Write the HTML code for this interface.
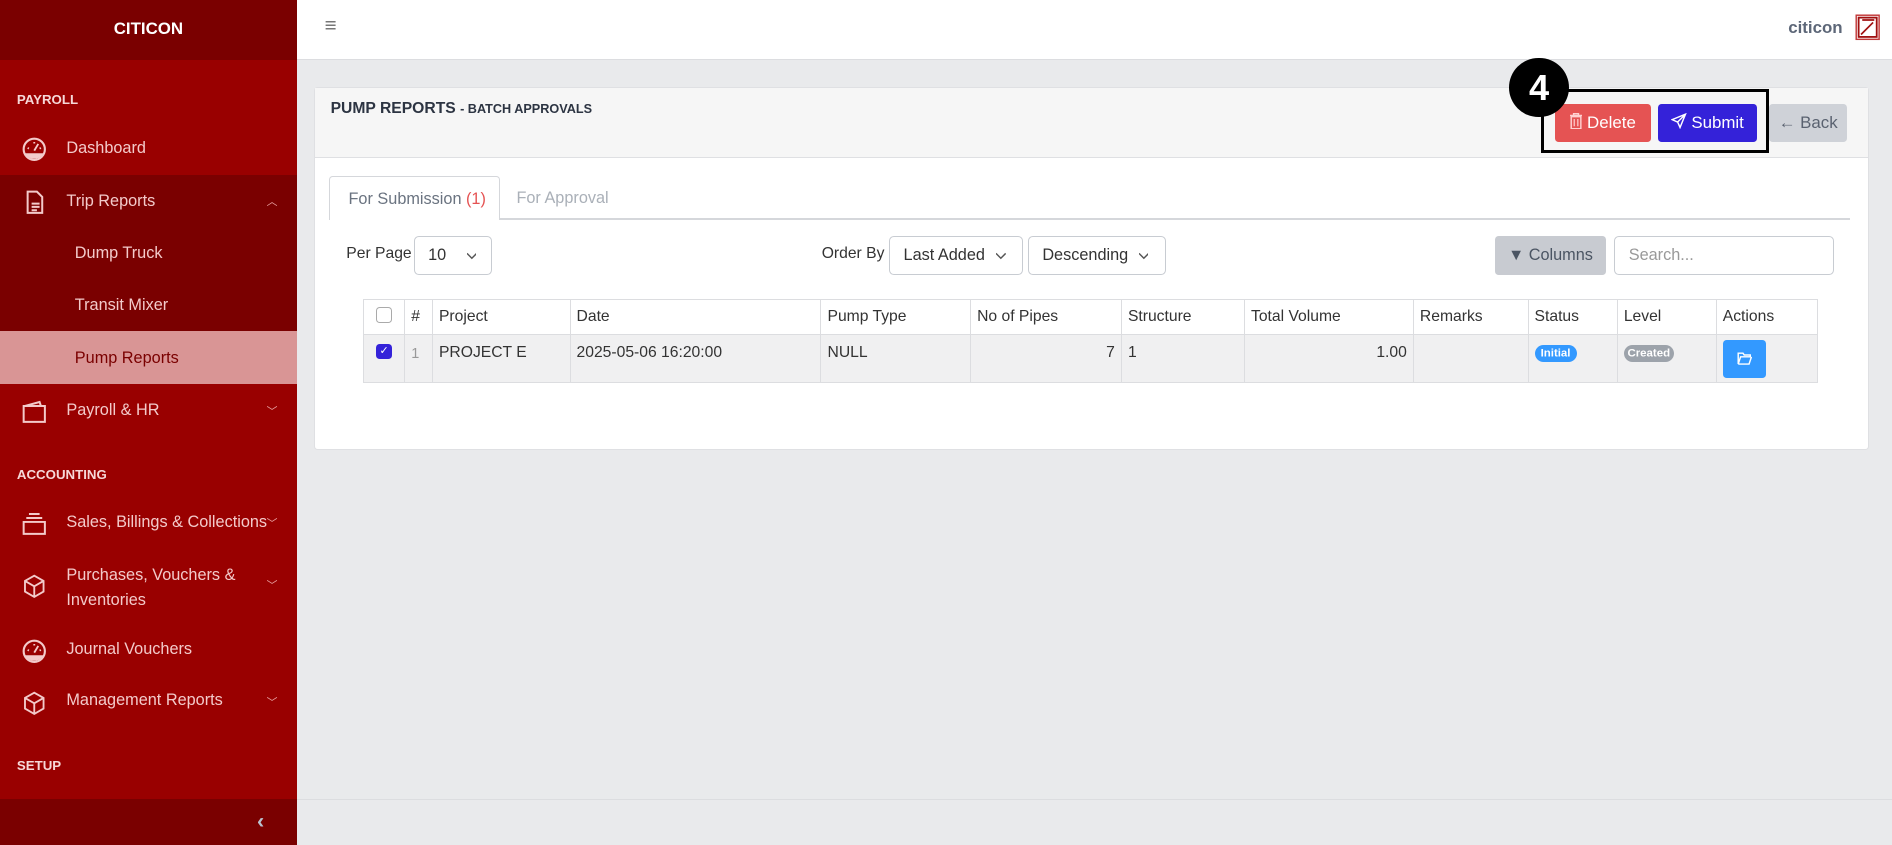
<!DOCTYPE html>
<html><head><meta charset="utf-8"><style>
*{box-sizing:border-box;margin:0;padding:0}
html,body{width:1892px;height:845px;overflow:hidden}
body{font-family:"Liberation Sans",sans-serif;background:#e9eaec;}
#w{zoom:1.20663;width:1568px;height:700.3px;position:relative;overflow:hidden;}
.a{position:absolute;white-space:nowrap}
#sb{position:absolute;left:0;top:0;width:246px;height:701px;background:#990000;color:#f3caca;font-size:13.5px}
.sec{font-size:11px;font-weight:bold;color:#f6d8d8;left:14px}
.it{left:55px}
.ic{left:17px;width:22px;height:22px}
.chev{left:221px;font-size:9px;color:#e8a0a0}
th,td{border:1px solid #dcdde0;font-size:13px;color:#333;text-align:left;padding:0 5px;font-weight:normal}
table{border-collapse:collapse;position:absolute;left:301px;top:248px;width:1206px;background:#fff}
.sel{position:absolute;border:1px solid #c8ccd2;border-radius:4px;background:#fff;font-size:13.5px;color:#333;height:32px;line-height:30px;padding-left:11px}
.dn{position:absolute;top:11px;width:8px;height:8px}
</style></head><body><div id="w">
<div id="sb">
 <div class="a" style="left:0;top:0;width:246px;height:50px;background:#7a0000"></div>
 <div class="a" style="left:0;top:16px;width:246px;text-align:center;color:#fff;font-weight:bold;font-size:14px">CITICON</div>
 <div class="a sec" style="top:76px">PAYROLL</div>
 <svg class="a ic" style="top:113px" viewBox="0 0 20 20"><circle cx="10" cy="10" r="8" fill="none" stroke="#f3caca" stroke-width="1.6"/><path d="M3 13h14a8 8 0 0 1-14 0z" fill="#f3caca"/><path d="M10 11l3-5M5 9l1 .5M15 9l-1 .5M10 4.5v1.2" stroke="#f3caca" stroke-width="1.4"/></svg>
 <div class="a it" style="top:115px">Dashboard</div>
 <div class="a" style="left:0;top:145px;width:246px;height:129px;background:#7a0000"></div>
 <svg class="a ic" style="top:157px" viewBox="0 0 20 20"><path d="M5 2h7l4 4v12H5z M8 11h6M8 13.5h6M8 16h4" fill="none" stroke="#f3caca" stroke-width="1.5"/></svg>
 <div class="a it" style="top:159px">Trip Reports</div>
 <div class="a chev" style="top:160px">︿</div>
 <div class="a" style="left:62px;top:202px">Dump Truck</div>
 <div class="a" style="left:62px;top:245px">Transit Mixer</div>
 <div class="a" style="left:0;top:274px;width:246px;height:44px;background:#d99595"></div>
 <div class="a" style="left:62px;top:289px;color:#7a0000">Pump Reports</div>
 <svg class="a ic" style="top:330px" viewBox="0 0 20 20"><path d="M2 6h16v12H2z M3 6l11-3 1 3" fill="none" stroke="#f3caca" stroke-width="1.5"/></svg>
 <div class="a it" style="top:332px">Payroll &amp; HR</div>
 <div class="a chev" style="top:334px">﹀</div>
 <div class="a sec" style="top:387px">ACCOUNTING</div>
 <svg class="a ic" style="top:423px" viewBox="0 0 20 20"><path d="M2 9h16v9H2z M4 6h12 M6 3h8" fill="none" stroke="#f3caca" stroke-width="1.5"/></svg>
 <div class="a it" style="top:425px">Sales, Billings &amp; Collections</div>
 <div class="a chev" style="top:427px">﹀</div>
 <svg class="a ic" style="top:475px" viewBox="0 0 20 20"><path d="M10 2l7 4v8l-7 4-7-4V6z M3 6l7 4 7-4 M10 10v8" fill="none" stroke="#f3caca" stroke-width="1.4"/></svg>
 <div class="a it" style="top:467px;line-height:20px;white-space:normal;width:150px">Purchases, Vouchers &amp; Inventories</div>
 <div class="a chev" style="top:478px">﹀</div>
 <svg class="a ic" style="top:529px" viewBox="0 0 20 20"><circle cx="10" cy="10" r="8" fill="none" stroke="#f3caca" stroke-width="1.6"/><path d="M3 13h14a8 8 0 0 1-14 0z" fill="#f3caca"/><path d="M10 11l3-5M5 9l1 .5M15 9l-1 .5M10 4.5v1.2" stroke="#f3caca" stroke-width="1.4"/></svg>
 <div class="a it" style="top:530px">Journal Vouchers</div>
 <svg class="a ic" style="top:572px" viewBox="0 0 20 20"><path d="M10 2l7 4v8l-7 4-7-4V6z M3 6l7 4 7-4 M10 10v8" fill="none" stroke="#f3caca" stroke-width="1.4"/></svg>
 <div class="a it" style="top:573px">Management Reports</div>
 <div class="a chev" style="top:575px">﹀</div>
 <div class="a sec" style="top:628px">SETUP</div>
 <div class="a" style="left:0;top:662px;width:246px;height:40px;background:#7a0000"></div>
 <div class="a" style="left:213px;top:670px;color:#b9c3d0;font-size:18px;font-weight:bold">‹</div>
</div>
<div class="a" style="left:246px;top:0;width:1322px;height:50px;background:#fff;border-bottom:1px solid #dcdde0"></div>
<div class="a" style="left:269px;top:12px;font-size:17px;color:#777">≡</div>
<div class="a" style="left:1482px;top:15px;font-size:14px;font-weight:bold;color:#5d6778">citicon</div>
<svg class="a" style="left:1537px;top:12px" width="21" height="22" viewBox="0 0 21 22"><rect x="1" y="1" width="19" height="20" fill="none" stroke="#c23a3a" stroke-width="1.2"/><rect x="3" y="3" width="15" height="16" fill="none" stroke="#a01010" stroke-width="1.5"/><path d="M5 17L15 7M6 5h10" stroke="#a01010" stroke-width="1.4"/></svg>
<div class="a" style="left:246px;top:662px;width:1322px;height:1px;background:#dcdde0"></div>
<div class="a" style="left:260px;top:72px;width:1289px;height:301px;background:#fff;border:1px solid #dfe0e3;border-radius:3px"></div>
<div class="a" style="left:261px;top:73px;width:1287px;height:58px;background:#f6f6f6;border-bottom:1px solid #dfe0e3"></div>
<div class="a" style="left:274px;top:83px;font-size:13px;font-weight:bold;color:#2c3442">PUMP REPORTS <span style="font-size:10.5px">- BATCH APPROVALS</span></div>
<div class="a" style="left:1289px;top:86px;width:79px;height:32px;background:#e55353;border-radius:3px;color:#fff;font-size:14px;line-height:32px;text-align:center"><svg width="10" height="13" viewBox="0 0 10 13" style="vertical-align:-1px;margin-right:4px"><path d="M0 2h10M3 2V0.5h4V2M1 3h8v10H1z" fill="none" stroke="#ffd0d0" stroke-width="1.2"/><path d="M3.5 5v6M6.5 5v6" stroke="#ffd0d0"/></svg>Delete</div>
<div class="a" style="left:1374px;top:86px;width:82px;height:32px;background:#3422d9;border-radius:3px;color:#fff;font-size:14px;line-height:32px;text-align:center"><svg width="13" height="13" viewBox="0 0 13 13" style="vertical-align:-1px;margin-right:4px"><path d="M12 1L1 5.5l4.5 2L7.5 12z M5.5 7.5L12 1" fill="none" stroke="#fff" stroke-width="1.2"/></svg>Submit</div>
<div class="a" style="left:1466px;top:86px;width:65px;height:32px;background:#cfd2d8;border-radius:3px;color:#5a6270;font-size:14px;line-height:32px;text-align:center">← Back</div>
<div class="a" style="left:1277px;top:74px;width:189px;height:53px;border:3px solid #000"></div>
<div class="a" style="left:1251px;top:48px;width:49px;height:49px;background:#000;border-radius:50%;color:#fff;font-size:30px;font-weight:bold;text-align:center;line-height:49px">4</div>
<div class="a" style="left:273px;top:181px;width:1260px;height:1px;background:#d5d7db"></div>
<div class="a" style="left:273px;top:146px;width:141px;height:36px;background:#fff;border:1px solid #d5d7db;border-bottom:none;border-radius:3px 3px 0 0;font-size:13.5px;color:#6a7380;padding:11px 0 0 15px">For Submission <span style="color:#e55353">(1)</span></div>
<div class="a" style="left:428px;top:157px;font-size:13.5px;color:#aab0b8">For Approval</div>
<div class="a" style="left:287px;top:203px;font-size:13px;color:#333">Per Page</div>
<div class="sel" style="left:343px;top:196px;width:65px">10 <svg class="dn" style="left:43px" viewBox="0 0 8 8"><path d="M0 2l4 4 4-4" fill="none" stroke="#555" stroke-width="1.2"/></svg></div>
<div class="a" style="left:681px;top:203px;font-size:13px;color:#333">Order By</div>
<div class="sel" style="left:737px;top:196px;width:111px">Last Added <svg class="dn" style="left:88px" viewBox="0 0 8 8"><path d="M0 2l4 4 4-4" fill="none" stroke="#555" stroke-width="1.2"/></svg></div>
<div class="sel" style="left:852px;top:196px;width:114px">Descending <svg class="dn" style="left:91px" viewBox="0 0 8 8"><path d="M0 2l4 4 4-4" fill="none" stroke="#555" stroke-width="1.2"/></svg></div>
<div class="a" style="left:1239px;top:196px;width:92px;height:32px;background:#c8cbd1;border-radius:3px;color:#4b5563;font-size:13.5px;line-height:32px;text-align:center">▼ Columns</div>
<div class="sel" style="left:1338px;top:196px;width:182px;color:#999">Search...</div>
<table>
<tr style="height:29px"><th style="width:34px"><span style="display:inline-block;width:13px;height:13px;border:1px solid #aaa;border-radius:3px;margin-left:5px"></span></th><th style="width:23px">#</th><th style="width:114px">Project</th><th style="width:208px">Date</th><th style="width:124px">Pump Type</th><th style="width:125px">No of Pipes</th><th style="width:102px">Structure</th><th style="width:140px">Total Volume</th><th style="width:95px">Remarks</th><th style="width:74px">Status</th><th style="width:82px">Level</th><th>Actions</th></tr>
<tr style="height:40px;background:#f0f0f1"><td style="vertical-align:top;padding-top:7px"><span style="display:inline-block;width:13px;height:13px;background:#3422d9;border-radius:3px;margin-left:5px;color:#fff;font-size:9px;text-align:center;line-height:13px;vertical-align:top">✓</span></td><td style="color:#999;font-size:12px;vertical-align:top;padding-top:9px">1</td><td style="vertical-align:top;padding-top:7px">PROJECT E</td><td style="vertical-align:top;padding-top:7px">2025-05-06 16:20:00</td><td style="vertical-align:top;padding-top:7px">NULL</td><td style="text-align:right;vertical-align:top;padding-top:7px">7</td><td style="vertical-align:top;padding-top:7px">1</td><td style="text-align:right;vertical-align:top;padding-top:7px">1.00</td><td></td><td style="vertical-align:top;padding-top:7px"><span style="background:#3399ff;color:#fff;font-size:9.5px;font-weight:bold;border-radius:9px;padding:2px 5px">Initial</span></td><td style="vertical-align:top;padding-top:7px"><span style="background:#9da3ab;color:#fff;font-size:9.5px;font-weight:bold;border-radius:9px;padding:2px 3px">Created</span></td><td><span style="display:inline-block;width:36px;height:32px;background:#3399ff;border-radius:3px;text-align:center;padding-top:10px"><svg width="13" height="11" viewBox="0 0 13 11"><path d="M1 1h4l1 1.5h5V4H3L1 10z M1 10h9l2-6" fill="none" stroke="#fff" stroke-width="1.2"/></svg></span></td></tr>
</table>
</div></body></html>
